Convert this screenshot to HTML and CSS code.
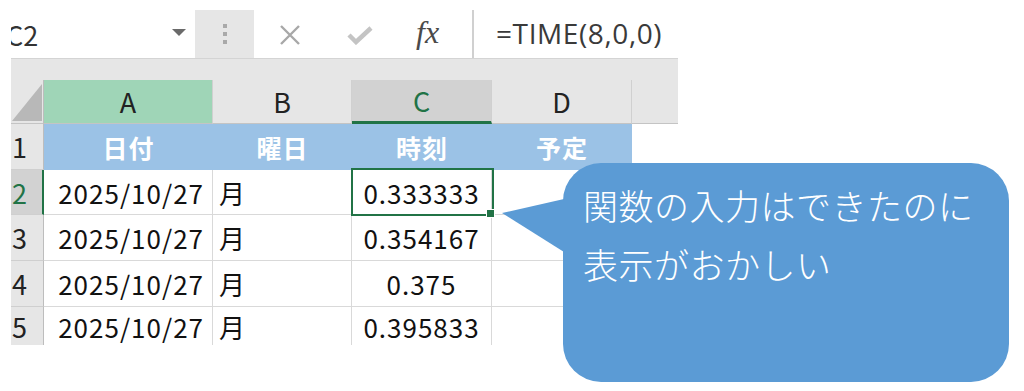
FILE: index.html
```html
<!DOCTYPE html>
<html lang="ja">
<head>
<meta charset="utf-8">
<link rel="stylesheet" href="styles.css">
</head>
<body>
<div class="app">
  <div class="fbar">
    <div class="namebox">
      <span class="nb-text">C2</span>
      <span class="dropdown"></span>
    </div>
    <div class="grip"><i></i><i></i><i></i></div>
    <div class="btns">
      <svg class="ico-x" width="24" height="22" viewBox="0 0 24 22"><path d="M3 2 L21 20 M21 2 L3 20" stroke="#a8a8a8" stroke-width="2.4" fill="none"/></svg>
      <svg class="ico-ok" width="26" height="20" viewBox="0 0 26 20"><path d="M2 10 L9 17 L24 3" stroke="#c4c4c4" stroke-width="4.5" fill="none"/></svg>
      <span class="fx">fx</span>
    </div>
    <div class="sep"></div>
    <div class="formula">=TIME(8,0,0)</div>
  </div>
  <div class="band"></div>
  <div class="sheet">
    <div class="ch corner"><span class="tri"></span></div>
    <div class="ch col-a">A</div>
    <div class="ch">B</div>
    <div class="ch col-sel">C</div>
    <div class="ch">D</div>
    <div class="ch ch-rest"></div>

    <div class="rh">1</div>
    <div class="hd">日付</div>
    <div class="hd">曜日</div>
    <div class="hd">時刻</div>
    <div class="hd">予定</div>
    <div class="blank"></div>

    <div class="rh rh-sel">2</div>
    <div class="c num">2025/10/27</div>
    <div class="c">月</div>
    <div class="c ctr sel">0.333333<span class="selbox"></span><span class="handle"></span></div>
    <div class="c"></div>
    <div class="c"></div>

    <div class="rh">3</div>
    <div class="c num">2025/10/27</div>
    <div class="c">月</div>
    <div class="c ctr">0.354167</div>
    <div class="c"></div>
    <div class="c"></div>

    <div class="rh">4</div>
    <div class="c num">2025/10/27</div>
    <div class="c">月</div>
    <div class="c ctr">0.375</div>
    <div class="c"></div>
    <div class="c"></div>

    <div class="rh last">5</div>
    <div class="c num last">2025/10/27</div>
    <div class="c last">月</div>
    <div class="c ctr last">0.395833</div>
    <div class="c last"></div>
    <div class="c last"></div>
  </div>
</div>
<div class="callout">関数の入力はできたのに<br>表示がおかしい</div>
</body>
</html>
```

FILE: styles.css
```css
html, body {
  margin: 0;
  padding: 0;
  background: #ffffff;
}
body {
  width: 1024px;
  height: 391px;
  overflow: hidden;
  position: relative;
  font-family: "Noto Sans CJK JP", "Noto Sans", sans-serif;
  color: #1a1a1a;
}
.app {
  margin-left: 11px;
  margin-top: 10px;
  width: 667px;
}
.fbar {
  display: flex;
  height: 49px;
  background: #e6e6e6;
  border-bottom: 1px solid #d4d4d4;
  box-sizing: border-box;
}
.namebox {
  width: 184px;
  background: #fff;
  position: relative;
  overflow: hidden;
  display: flex;
  align-items: center;
  margin-top: -10px;
  padding-top: 10px;
}
.nb-text {
  font-size: 27px;
  margin-left: -5px;
  color: #333;
  line-height: 1;
}
.dropdown {
  position: absolute;
  left: 161px;
  top: 29px;
  width: 0;
  height: 0;
  border-left: 7px solid transparent;
  border-right: 7px solid transparent;
  border-top: 7px solid #6a6a6a;
}
.grip {
  width: 59px;
  display: flex;
  flex-direction: column;
  align-items: center;
  justify-content: center;
  gap: 4px;
}
.grip i {
  display: block;
  width: 4px;
  height: 4px;
  background: #a9a9a9;
}
.btns {
  width: 213px;
  background: #fff;
  position: relative;
}
.ico-x {
  position: absolute;
  left: 24px;
  top: 14px;
}
.ico-ok {
  position: absolute;
  left: 93px;
  top: 15px;
}
.fx {
  position: absolute;
  left: 162px;
  top: 4px;
  font-family: "Liberation Serif", serif;
  font-style: italic;
  font-size: 32px;
  color: #4a4a4a;
}
.sep {
  width: 5px;
  background: #fff;
  border-right: 2px solid #d0d0d0;
}
.formula {
  flex: 1;
  background: #fff;
  font-family: "Open Sans", "Noto Sans", sans-serif;
  font-size: 28px;
  letter-spacing: 0.6px;
  color: #3a3a3a;
  padding-left: 22px;
  line-height: 47px;
}
.band {
  height: 21px;
  background: #e6e6e6;
}
.sheet {
  display: grid;
  grid-template-columns: 33px 169px 139px 140px 140px 46px;
  grid-template-rows: 44px 46px 45px 46px 46px 38px;
}
.ch {
  background: #e6e6e6;
  border-right: 1px solid #d0d0d0;
  border-bottom: 1px solid #c4c4c4;
  display: flex;
  align-items: center;
  justify-content: center;
  font-size: 27px;
  color: #222;
  box-sizing: border-box;
}
.corner {
  position: relative;
  border-right: 1px solid #bdbdbd;
}
.tri {
  position: absolute;
  left: 1px;
  bottom: 2px;
  width: 30px;
  height: 37px;
  background: #b8b8b8;
  clip-path: polygon(100% 0, 100% 100%, 0 100%);
}
.col-a {
  background: #9fd5b7;
}
.col-sel {
  background: #d2d2d2;
  color: #217346;
  border-bottom: 3px solid #217346;
}
.ch-rest {
  border-right: none;
}
.rh {
  background: #e6e6e6;
  border-right: 1px solid #bdbdbd;
  border-bottom: 1px solid #cfcfcf;
  font-size: 27px;
  color: #222;
  display: flex;
  align-items: center;
  padding-left: 1px;
  box-sizing: border-box;
}
.rh-sel {
  background: #d2d2d2;
  color: #217346;
  border-right: 2px solid #217346;
}
.hd {
  background: #9bc2e6;
  color: #fff;
  font-weight: 700;
  font-size: 25px;
  display: flex;
  align-items: center;
  justify-content: center;
  letter-spacing: 1px;
}
.blank {
  background: #fff;
}
.c {
  background: #fff;
  border-right: 1px solid #d9d9d9;
  border-bottom: 1px solid #d9d9d9;
  font-size: 26px;
  display: flex;
  align-items: center;
  padding-left: 6px;
  box-sizing: border-box;
  color: #111;
}
.num {
  justify-content: flex-end;
  padding-right: 8px;
  letter-spacing: 1px;
}
.ctr {
  justify-content: center;
  padding-left: 0;
  letter-spacing: 1px;
}
.sel {
  position: relative;
}
.selbox {
  position: absolute;
  left: -1px;
  top: -2px;
  right: -3px;
  bottom: -2px;
  border: 2px solid #217346;
}
.handle {
  position: absolute;
  right: -4px;
  bottom: -4px;
  width: 7px;
  height: 7px;
  background: #217346;
  border: 1px solid #fff;
}
.last {
  border-bottom: none;
}
.callout {
  position: absolute;
  left: 563px;
  top: 163px;
  width: 446px;
  height: 219px;
  box-sizing: border-box;
  background: #5b9bd5;
  border-radius: 38px;
  color: #fff;
  font-family: "Noto Sans CJK JP", sans-serif;
  font-weight: 300;
  font-size: 35px;
  line-height: 59px;
  padding: 12px 0 0 20px;
  letter-spacing: 0.5px;
}
.callout::before {
  content: "";
  position: absolute;
  left: -61px;
  top: 36px;
  width: 62px;
  height: 53px;
  background: #5b9bd5;
  clip-path: polygon(0 14px, 100% 0, 100% 100%);
}
```
